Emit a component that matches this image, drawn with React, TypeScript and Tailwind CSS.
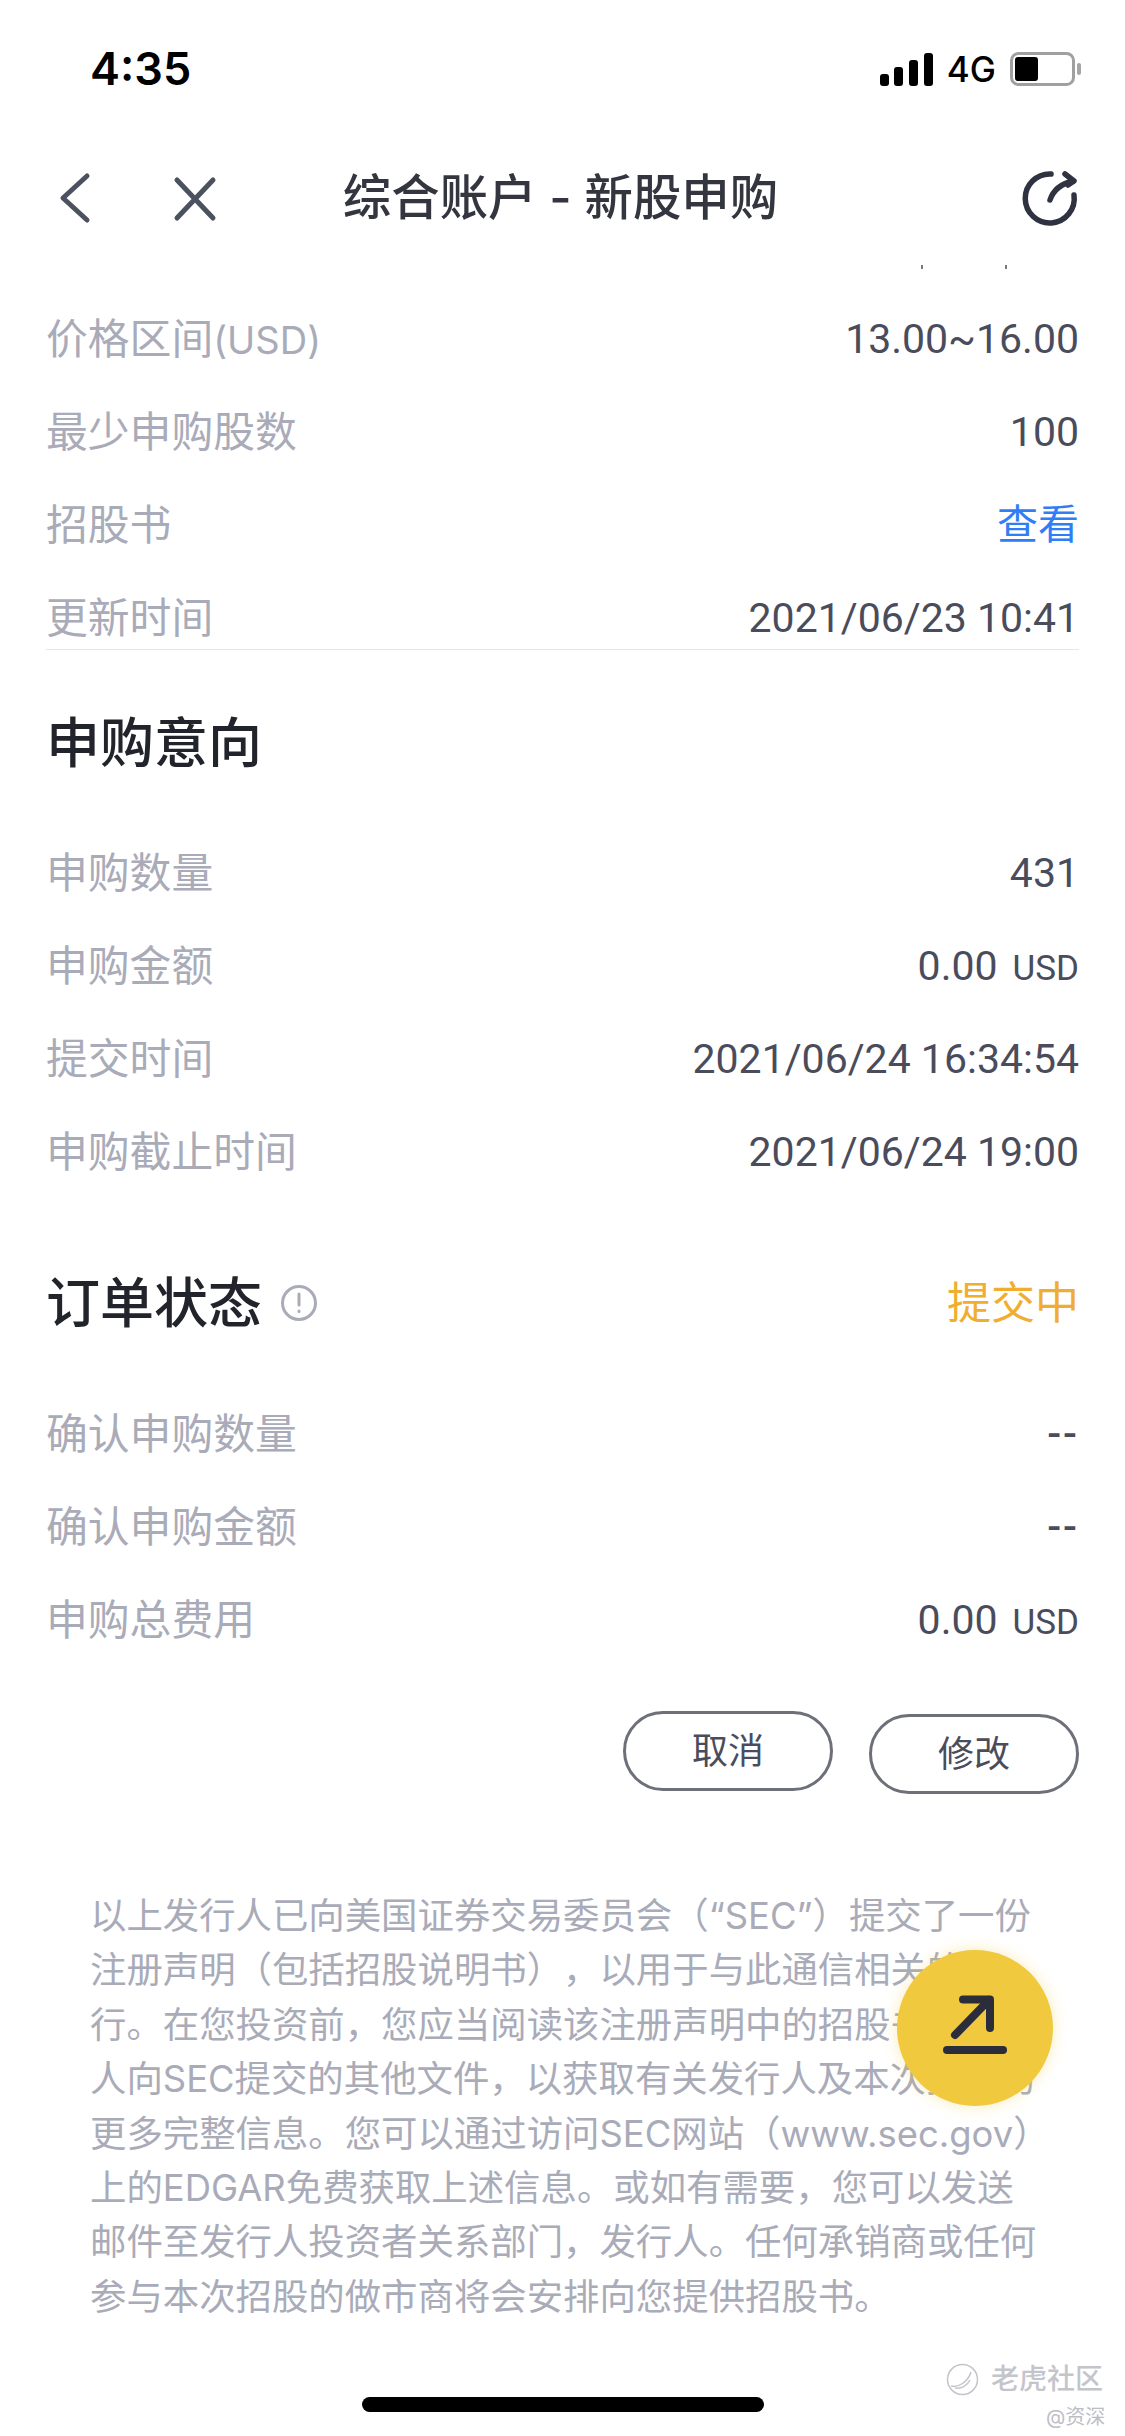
import React from "react";

const FONT = "font-['Inter','Noto_Sans_CJK_SC',sans-serif]";

const Row = ({ label, children }: { label: React.ReactNode; children: React.ReactNode }) => (
  <div className="flex h-[62px] items-center justify-between">
    <span className="text-[41.8px] text-[#a9abb8]">{label}</span>
    <span className="pt-[2px] font-['Roboto','Noto_Sans_CJK_SC',sans-serif] text-[41px] text-[#4a4c5c]">{children}</span>
  </div>
);

const Usd = ({ value }: { value: string }) => (
  <>
    {value}
    <span className="ml-[15px] text-[35px]">USD</span>
  </>
);

const lines = [
  "以上发行人已向美国证券交易委员会（“SEC”）提交了一份",
  "注册声明（包括招股说明书），以用于与此通信相关的发",
  "行。在您投资前，您应当阅读该注册声明中的招股书和发",
  "人向SEC提交的其他文件，以获取有关发行人及本次招股的",
  "更多完整信息。您可以通过访问SEC网站（www.sec.gov）",
  "上的EDGAR免费获取上述信息。或如有需要，您可以发送",
  "邮件至发行人投资者关系部门，发行人。任何承销商或任何",
  "参与本次招股的做市商将会安排向您提供招股书。",
];

const App = () => {
  return (
    <div className={`relative h-[2436px] w-[1125px] overflow-hidden bg-white ${FONT}`}>
      {/* Status bar */}
      <div className="flex h-[138px] items-center justify-between pl-[90px] pr-[43px]">
        <span className="text-[45px] font-semibold text-black">4:35</span>
        <div className="flex items-center gap-[14px]">
          <svg width="53" height="33" viewBox="0 0 53 33" fill="#000">
            <rect x="0" y="21" width="9" height="12" rx="3" />
            <rect x="14" y="14" width="9" height="19" rx="3" />
            <rect x="29" y="7" width="9" height="26" rx="3" />
            <rect x="44" y="0" width="9" height="33" rx="3" />
          </svg>
          <span className="text-[35px] font-medium text-black">4G</span>
          <svg width="72" height="34" viewBox="0 0 72 34">
            <rect x="1.5" y="1.5" width="62" height="31" rx="7" fill="#fff" stroke="#a0a0a0" strokeWidth="3" />
            <rect x="5" y="5" width="23" height="24" rx="3" fill="#000" />
            <rect x="67" y="11" width="4" height="12" rx="2" fill="#a5a5a5" />
          </svg>
        </div>
      </div>

      {/* Nav bar */}
      <div className="relative flex h-[130px] items-center justify-center">
        <svg className="absolute left-[56px] top-[34px]" width="40" height="52" viewBox="0 0 40 52" fill="none" stroke="#4c5160" strokeWidth="5" strokeLinecap="round" strokeLinejoin="round">
          <path d="M31 4 L7 26 L31 48" />
        </svg>
        <svg className="absolute left-[172px] top-[38px]" width="46" height="46" viewBox="0 0 46 46" fill="none" stroke="#4c5160" strokeWidth="5" strokeLinecap="round">
          <path d="M5 4 L41 42 M41 4 L5 42" />
        </svg>
        <span className="mb-[10px] mr-[4px] text-[48.4px] font-medium text-[#33353f]">综合账户 - 新股申购</span>
        <svg className="absolute left-[1019px] top-[30px]" width="62" height="60" viewBox="0 0 62 60" fill="none" stroke="#2f3240" strokeWidth="5.5" strokeLinecap="round" strokeLinejoin="round">
          <path d="M32 6 A24.5 24.5 0 1 0 55 27" />
          <path d="M31 32 Q36 17 54 13" />
          <path d="M46 6 L55 13 L49 17" />
        </svg>
        {/* tips of the row scrolled under the bar */}
        <span className="absolute left-[921px] top-[127px] h-[4px] w-[2px] bg-[#777985]" />
        <span className="absolute left-[1005px] top-[127px] h-[4px] w-[2px] bg-[#777985]" />
      </div>

      {/* Scroll content */}
      <div className="px-[46px] pt-[40px]">
        <div className="flex flex-col gap-[31px] border-b border-[#e6e7ec]">
          <Row
            label={
              <>
                价格区间<span className="text-[38px]">(USD)</span>
              </>
            }
          >
            13.00~16.00
          </Row>
          <Row label="最少申购股数">100</Row>
          <Row label="招股书">
            <span className="text-[#2f7ef5]">查看</span>
          </Row>
          <Row label="更新时间">2021/06/23 10:41</Row>
        </div>

        <div className="mt-[58px] flex h-[70px] items-center text-[54px] font-medium text-[#22242c]">申购意向</div>
        <div className="mt-[64px] flex flex-col gap-[31px]">
          <Row label="申购数量">431</Row>
          <Row label="申购金额">
            <Usd value="0.00" />
          </Row>
          <Row label="提交时间">2021/06/24 16:34:54</Row>
          <Row label="申购截止时间">2021/06/24 19:00</Row>
        </div>

        <div className="mt-[85px] flex h-[70px] items-center justify-between">
          <div className="flex items-center gap-[18px]">
            <span className="text-[54px] font-medium text-[#22242c]">订单状态</span>
            <svg width="38" height="38" viewBox="0 0 38 38" fill="none" stroke="#a9abb8" strokeWidth="3" strokeLinecap="round">
              <circle cx="19" cy="19" r="16.5" />
              <path d="M19 10 V21 M19 27 V27.5" />
            </svg>
          </div>
          <span className="text-[44px] text-[#f0ae30]">提交中</span>
        </div>
        <div className="mt-[65px] flex flex-col gap-[31px]">
          <Row label="确认申购数量">
            <span className="font-medium tracking-[2px]">--</span>
          </Row>
          <Row label="确认申购金额">
            <span className="font-medium tracking-[2px]">--</span>
          </Row>
          <Row label="申购总费用">
            <Usd value="0.00" />
          </Row>
        </div>

        <div className="mt-[60px] flex items-start justify-end gap-[36px]">
          <button className="h-[80px] w-[210px] rounded-[40px] border-[3px] border-[#6e7079] text-[36px] text-[#4a4c5c]">取消</button>
          <button className="mt-[3px] h-[80px] w-[210px] rounded-[40px] border-[3px] border-[#6e7079] text-[36px] text-[#4a4c5c]">修改</button>
        </div>

        <div className="mt-[95px] px-[44px] text-[36.4px] leading-[54.4px] text-[#a9abb8] [text-spacing-trim:space-all]">
          {lines.map((line) => (
            <div key={line} className="whitespace-nowrap">
              {line}
            </div>
          ))}
        </div>
      </div>

      {/* Floating button */}
      <div className="absolute left-[897px] top-[1950px] flex h-[156px] w-[156px] items-center justify-center rounded-full bg-[#f0c93e] shadow-[0_0_16px_rgba(240,201,62,0.35)]">
        <svg className="overflow-visible" width="64" height="64" viewBox="0 0 64 64" fill="none" stroke="#2b2d3a" strokeWidth="8" strokeLinecap="round" strokeLinejoin="round">
          <path d="M12 39 L46 4" />
          <path d="M20 3.5 H47 V32" />
          <path d="M4 54 H60" />
        </svg>
      </div>

      {/* Watermark */}
      <div className="absolute left-[946px] top-[2358px] flex items-center gap-[12px] text-[#c4c5cb]">
        <svg width="33" height="33" viewBox="0 0 33 33" fill="none" stroke="#c4c5cb" strokeWidth="1.5">
          <circle cx="16.5" cy="16.5" r="15" />
          <path d="M5 23 C12 25 22 19 25 9 M9 25 C15 26 21 23 24 17" />
        </svg>
        <span className="text-[28px] font-medium">老虎社区</span>
      </div>
      <div className="absolute left-[1046px] top-[2402px] text-[20px] text-[#bdbec5]">@资深</div>

      {/* Home indicator */}
      <div className="absolute left-[362px] top-[2397px] h-[15px] w-[402px] rounded-full bg-black" />
    </div>
  );
};

export default App;
